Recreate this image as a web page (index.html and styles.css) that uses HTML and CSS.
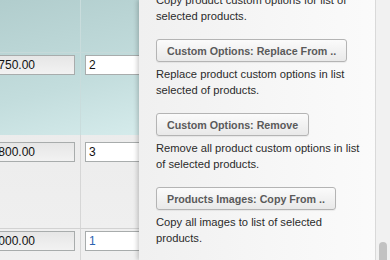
FILE: index.html
```html
<!DOCTYPE html>
<html lang="en">
<head>
  <meta charset="UTF-8" />
  <title>Mass Actions</title>
  <link rel="stylesheet" href="styles.css">
</head>
<body>

  <div class="grid">
    <div class="selected">
      <div class="row row-top">
        <div class="cell price"></div>
        <div class="cell qty"></div>
      </div>
      <div class="row row-b">
        <div class="cell price"><input class="field price-field" type="text" value="750.00"></div>
        <div class="cell qty"><input class="field qty-field" type="text" value="2"></div>
      </div>
    </div>
    <div class="row row-c">
      <div class="cell price"><input class="field price-field" type="text" value="1,800.00"></div>
      <div class="cell qty"><input class="field qty-field" type="text" value="3"></div>
    </div>
    <div class="row row-d">
      <div class="cell price"><input class="field price-field" type="text" value="1,000.00"></div>
      <div class="cell qty"><input class="field qty-field changed" type="text" value="1"></div>
    </div>
  </div>

  <div class="panel">
    <div class="panel-body">
      <p class="desc">Copy product custom options for list of selected products.</p>

      <button class="action">Custom Options: Replace From ..</button>
      <p class="desc">Replace product custom options in list selected of products.</p>

      <button class="action">Custom Options: Remove</button>
      <p class="desc">Remove all product custom options in list of selected products.</p>

      <button class="action">Products Images: Copy From ..</button>
      <p class="desc">Copy all images to list of selected products.</p>
    </div>
    <div class="scrollbar">
      <div class="thumb"></div>
    </div>
  </div>

</body>
</html>
```

FILE: styles.css
```css
* {
  margin: 0;
  padding: 0;
  box-sizing: border-box;
  font-family: 'Liberation Sans', Arial, sans-serif;
}

body {
  display: flex;
  width: 390px;
  height: 260px;
  overflow: hidden;
  background: #ededed;
}

/* table behind the panel */
.grid {
  width: 150px;
  flex: none;
  margin-right: -11px;
  display: flex;
  flex-direction: column;
  background: linear-gradient(180deg, #e8e8e8, #f0f0f0);
}

.selected {
  background: linear-gradient(165deg, #b1cdcd 0%, #c3dddd 60%, #d6ecec 100%);
}

.row {
  display: flex;
}

.row-top {
  height: 53px;
  border-bottom: 1px solid #c6d9d9;
}

.row-b {
  height: 82px;
}

.row-c {
  height: 94px;
  border-bottom: 1px solid #d2d2d2;
}

.row-d {
  flex: 1;
}

.cell {
  overflow: hidden;
}

.cell.price {
  width: 81px;
  border-right: 1px solid #c9dcdc;
}

.row-c .cell.price,
.row-d .cell.price {
  border-right-color: #d6d6d6;
}

.cell.qty {
  flex: 1;
  padding-left: 4px;
}

.row-b .cell {
  padding-top: 2px;
}

.row-c .cell {
  padding-top: 7px;
}

.row-d .cell {
  padding-top: 2px;
}

.field {
  display: block;
  height: 20px;
  border: 1px solid #a8acac;
  font-size: 12px;
  color: #111;
  padding: 0 3px;
  outline: none;
}

.price-field {
  width: 95px;
  margin-left: -20px;
  padding-right: 39px;
  text-align: right;
  background: linear-gradient(180deg, #e6e6e6, #f2f2f2);
}

.qty-field {
  width: 90px;
  background: #fff;
}

.changed {
  color: #2a62b0;
}

/* right hand panel */
.panel {
  flex: 1;
  display: flex;
  position: relative;
  background: linear-gradient(90deg, #f0f0f0, #f7f7f7 60%, #fbfbfb);
  box-shadow: -2px 0 4px rgba(0, 0, 0, 0.18);
}

.panel-body {
  flex: 1;
  padding-left: 17px;
  margin-top: -12px;
}

.desc {
  width: 208px;
  font-size: 11.2px;
  line-height: 16px;
  color: #2b2b2b;
  margin-top: 4px;
}

.action {
  display: block;
  height: 23px;
  margin-top: 15px;
  padding: 0 10px;
  font-size: 10.7px;
  font-weight: bold;
  color: #5a5a5a;
  background: linear-gradient(180deg, #fbfbfb, #e9e9e9);
  border: 1px solid #b4b4b4;
  border-radius: 3px;
  box-shadow: 0 1px 1px rgba(0, 0, 0, 0.06);
}

.scrollbar {
  width: 15px;
  flex: none;
  background: #f1f1f1;
  border-left: 1px solid #d9d9d9;
  position: relative;
}

.thumb {
  position: absolute;
  left: 3px;
  top: 242px;
  width: 8px;
  height: 40px;
  border-radius: 4px;
  background: #c2c2c2;
}
```
